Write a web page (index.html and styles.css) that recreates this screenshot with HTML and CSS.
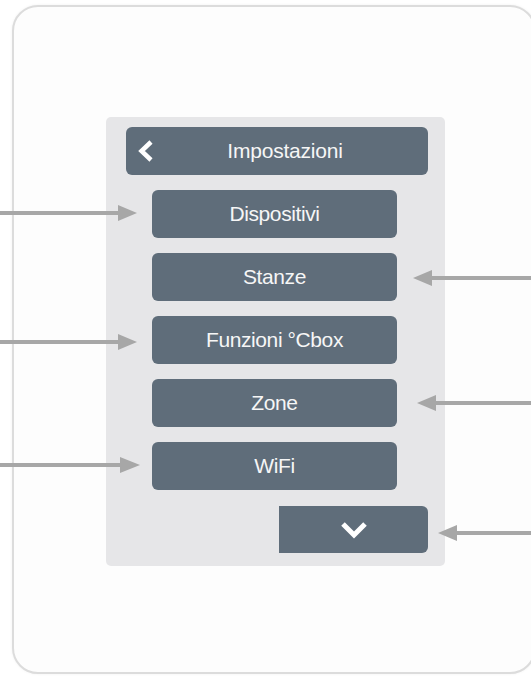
FILE: index.html
```html
<!DOCTYPE html>
<html lang="it">
<head>
    <meta charset="UTF-8">
    <meta name="viewport" content="width=device-width, initial-scale=1.0">
    <title>Impostazioni</title>
    <link rel="stylesheet" href="styles.css">
</head>
<body>
    <div class="device">
        <div class="panel">
            <div class="header">
                <svg class="back" width="16" height="22" viewBox="0 0 16 22">
                    <path d="M13 2 L3.5 11 L13 20" fill="none" stroke="#fff" stroke-width="4.5" stroke-linejoin="miter"/>
                </svg>
                <span class="title">Impostazioni</span>
            </div>
            <div class="menu">
                <div class="item">Dispositivi</div>
                <div class="item">Stanze</div>
                <div class="item">Funzioni °Cbox</div>
                <div class="item">Zone</div>
                <div class="item">WiFi</div>
            </div>
            <div class="more">
                <svg width="28" height="20" viewBox="0 0 28 20">
                    <path d="M3 4 L14 15 L25 4" fill="none" stroke="#fff" stroke-width="5"/>
                </svg>
            </div>
        </div>
    </div>

    <!-- callout arrows drawn over the screen -->
    <svg class="arrows" width="531" height="676" viewBox="0 0 531 676">
        <g fill="#a7a7a7">
            <rect x="0" y="211" width="121" height="4"/>
            <polygon points="118,205 137,213 118,221"/>
            <rect x="0" y="340" width="121" height="4"/>
            <polygon points="118,334 137,342 118,350"/>
            <rect x="0" y="463" width="123" height="4"/>
            <polygon points="120,457 140,465 120,473"/>

            <rect x="430" y="276" width="101" height="4"/>
            <polygon points="432,270 413,278 432,286"/>
            <rect x="434" y="401" width="97" height="4"/>
            <polygon points="436,395 417,403 436,411"/>
            <rect x="455" y="531" width="76" height="4"/>
            <polygon points="457,525 438,533 457,541"/>
        </g>
    </svg>
</body>
</html>
```

FILE: styles.css
```css
html, body {
    margin: 0;
    padding: 0;
    overflow: hidden;
}

body {
    width: 531px;
    height: 676px;
    background: #ffffff;
    font-family: "Liberation Sans", Arial, sans-serif;
    position: relative;
}

.device {
    box-sizing: border-box;
    width: 524px;
    height: 669px;
    margin: 5px 0 0 12px;
    border: 2px solid #dcdcdc;
    border-radius: 26px;
    background: #fdfdfd;
    box-shadow: 0 0 3px rgba(0, 0, 0, 0.06);
    padding: 110px 0 0 92px;
}

.panel {
    box-sizing: border-box;
    width: 339px;
    height: 449px;
    background: #e6e6e8;
    border-radius: 5px;
    padding: 10px 17px 13px 20px;
    display: flex;
    flex-direction: column;
}

.header {
    height: 48px;
    background: #5f6d7a;
    border-radius: 6px;
    display: flex;
    align-items: center;
    color: #f6f6f6;
    font-size: 21px;
    letter-spacing: -0.2px;
}

.back {
    margin-left: 12px;
    flex: none;
}

.title {
    flex: 1;
    text-align: center;
    padding-right: 12px;
}

.menu {
    display: flex;
    flex-direction: column;
    gap: 15px;
    margin: 15px 0 0 26px;
}

.item {
    width: 245px;
    height: 48px;
    background: #5f6d7a;
    border-radius: 6px;
    color: #f6f6f6;
    font-size: 21px;
    letter-spacing: -0.4px;
    display: flex;
    align-items: center;
    justify-content: center;
}

.more {
    align-self: flex-end;
    margin-top: auto;
    width: 149px;
    height: 47px;
    background: #5f6d7a;
    border-radius: 0 6px 6px 0;
    display: flex;
    align-items: center;
    justify-content: center;
}

.arrows {
    position: absolute;
    left: 0;
    top: 0;
    pointer-events: none;
}
```
